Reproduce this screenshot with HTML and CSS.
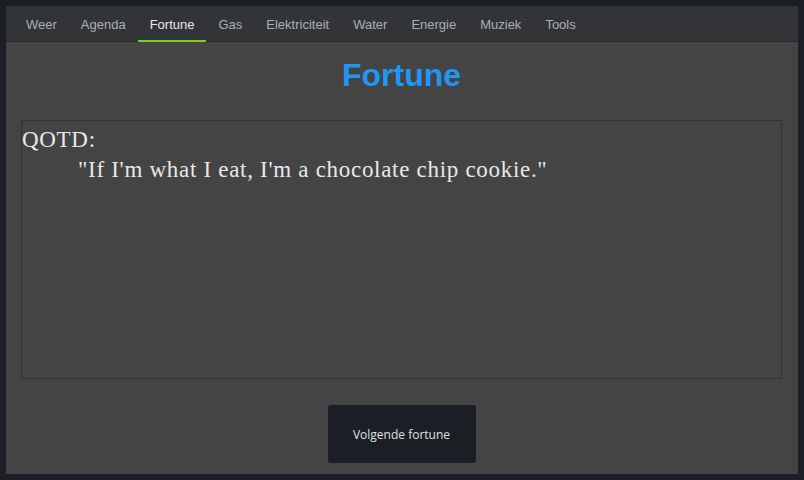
FILE: index.html
```html
<!DOCTYPE html>
<html>
<head>
<meta charset="utf-8">
<link rel="stylesheet" href="styles.css">
</head>
<body>
<div class="app">
  <nav class="tabs">
    <a class="tab">Weer</a>
    <a class="tab">Agenda</a>
    <a class="tab active">Fortune</a>
    <a class="tab">Gas</a>
    <a class="tab">Elektriciteit</a>
    <a class="tab">Water</a>
    <a class="tab">Energie</a>
    <a class="tab">Muziek</a>
    <a class="tab">Tools</a>
  </nav>
  <main class="content">
    <h1 class="title">Fortune</h1>
    <div class="fortune">
      <div class="line">QOTD:</div>
      <div class="line quote">"If I'm what I eat, I'm a chocolate chip cookie."</div>
    </div>
    <div class="actions">
      <button class="btn">Volgende fortune</button>
    </div>
  </main>
</div>
</body>
</html>
```
FILE: styles.css
```css
html, body {
  margin: 0;
  padding: 0;
  background: #1b1e25;
}
body {
  padding: 6px;
}
.app {
  width: 792px;
  height: 468px;
  background: #444444;
  display: flex;
  flex-direction: column;
}
.tabs {
  height: 36px;
  box-sizing: border-box;
  background: #333437;
  border-bottom: 1px solid #27282b;
  display: flex;
  padding-left: 8px;
  font-family: "Liberation Sans", Arial, sans-serif;
  font-size: 13px;
}
.tab {
  padding: 0 12px;
  color: #a9b0b8;
  display: flex;
  align-items: center;
  height: 36px;
  box-sizing: border-box;
  padding-top: 1px;
}
.tab.active {
  color: #e6e6e6;
  border-bottom: 2px solid #76d318;
  padding-top: 3px;
}
.content {
  flex: 1;
  display: flex;
  flex-direction: column;
  padding: 15px 16px 0 15px;
}
.title {
  margin: 0;
  text-align: center;
  font-family: "Liberation Sans", Arial, sans-serif;
  font-weight: bold;
  font-size: 32px;
  line-height: 37px;
  color: #2196f3;
}
.fortune {
  margin-top: 26px;
  height: 259px;
  box-sizing: border-box;
  border: 1px solid #333333;
  padding: 4px 0 0 0;
  font-family: "Liberation Serif", "Times New Roman", serif;
  font-size: 23px;
  line-height: 30px;
  letter-spacing: 0.7px;
  color: #e8e8e8;
}
.quote {
  padding-left: 56px;
}
.actions {
  margin-top: 26px;
  display: flex;
  justify-content: center;
}
.btn {
  width: 148px;
  height: 58px;
  border: none;
  border-radius: 3px;
  background: #1c1e25;
  color: #e0e0e0;
  font-family: "Open Sans", sans-serif;
  font-size: 12px;
  padding: 0;
}
```
